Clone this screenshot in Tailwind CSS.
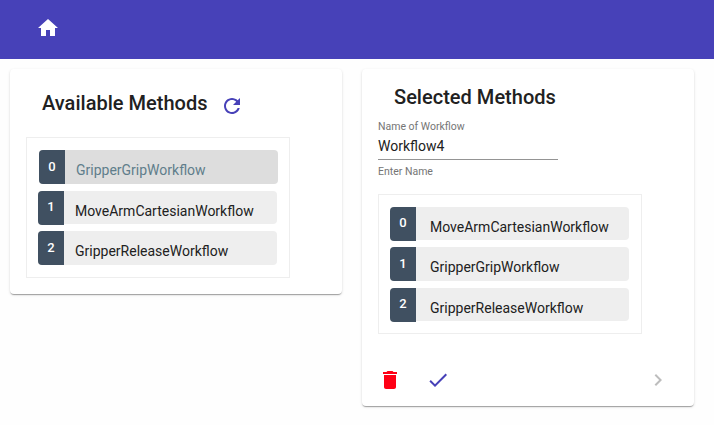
<!DOCTYPE html>
<html lang="en">
<head>
<meta charset="utf-8">
<title>Workflows</title>
<script src="https://cdn.jsdelivr.net/npm/@tailwindcss/browser@4"></script>
</head>
<body class="h-[425px] overflow-hidden bg-[#fefefe] font-['Roboto',sans-serif] text-[#212121]">
<header class="flex h-[59px] items-start bg-[#4741b8] pl-9 pt-4">
  <svg class="size-6 fill-white" viewBox="0 0 24 24"><path d="M10 20v-6h4v6h5v-8h3L12 3 2 12h3v8z"/></svg>
</header>
<main class="flex items-start gap-5 px-2.5 pt-[10px]">
  <section class="h-[225px] w-[332px] rounded bg-white px-4 shadow-[0_2px_1px_-1px_rgba(0,0,0,.2),0_1px_1px_0_rgba(0,0,0,.14),0_1px_3px_0_rgba(0,0,0,.12)]">
    <div class="flex h-[68px] pl-4 pt-[22px]">
      <h2 class="w-[178px] whitespace-nowrap text-[20px] leading-6 font-medium tracking-[0.02px]">Available Methods</h2>
      <svg class="mt-[3px] size-6 fill-[#4741b8]" viewBox="0 0 24 24"><path d="M17.65 6.35C16.2 4.9 14.21 4 12 4c-4.42 0-7.99 3.58-7.99 8s3.57 8 7.99 8c3.73 0 6.84-2.55 7.73-6h-2.08c-.82 2.33-3.04 4-5.65 4-3.31 0-6-2.69-6-6s2.69-6 6-6c1.66 0 3.14.69 4.22 1.78L13 11h7V4l-2.35 2.35z"/></svg>
    </div>
    <ul class="flex h-[141px] w-[264px] flex-col gap-[7px] border border-[#eee] pl-[11px] pt-3 text-[14px]">
      <li class="ml-px flex h-[34px] w-[239px] rounded bg-[#ddd] text-[#607d8b]">
        <span class="h-[34px] w-[26px] rounded-l bg-[#405061] pt-[9px] text-center text-[13px] leading-4 font-medium text-white">0</span>
        <span class="pl-[11px] pt-3 leading-4">GripperGripWorkflow</span>
      </li>
      <li class="flex h-[33px] w-[239px] rounded bg-[#eee]">
        <span class="h-[34px] w-[26px] rounded-l bg-[#405061] pt-2 text-center text-[13px] leading-4 font-medium text-white">1</span>
        <span class="pl-[11px] pt-3 leading-4">MoveArmCartesianWorkflow</span>
      </li>
      <li class="flex h-[34px] w-[239px] rounded bg-[#eee]">
        <span class="h-[34px] w-[26px] rounded-l bg-[#405061] pt-[9px] text-center text-[13px] leading-4 font-medium text-white">2</span>
        <span class="pl-[11px] pt-3 leading-4">GripperReleaseWorkflow</span>
      </li>
    </ul>
  </section>
  <section class="h-[337px] w-[332px] rounded bg-white px-4 shadow-[0_2px_1px_-1px_rgba(0,0,0,.2),0_1px_1px_0_rgba(0,0,0,.14),0_1px_3px_0_rgba(0,0,0,.12)]">
    <h2 class="h-[50px] pl-4 pt-4 text-[20px] leading-6 font-medium tracking-[0.02px]">Selected Methods</h2>
    <div class="flex h-[75px] w-[180px] flex-col">
      <label class="h-[18px] text-[10.5px] leading-4 text-[#757575]">Name of Workflow</label>
      <div class="h-[23px] border-b border-[#949494] text-[14px] leading-[18px]">Workflow4</div>
      <span class="pt-1 text-[10.5px] leading-4 text-[#757575]">Enter Name</span>
    </div>
    <ul class="flex h-[140px] w-[264px] flex-col gap-[7px] border border-[#eee] pl-[11px] pt-3 text-[14px]">
      <li class="flex h-[33px] w-[239px] rounded bg-[#eee]">
        <span class="h-[34px] w-[26px] rounded-l bg-[#405061] pt-2 text-center text-[13px] leading-4 font-medium text-white">0</span>
        <span class="pl-3.5 pt-3 leading-4">MoveArmCartesianWorkflow</span>
      </li>
      <li class="flex h-[34px] w-[239px] rounded bg-[#eee]">
        <span class="h-[34px] w-[26px] rounded-l bg-[#405061] pt-[9px] text-center text-[13px] leading-4 font-medium text-white">1</span>
        <span class="pl-3.5 pt-3 leading-4">GripperGripWorkflow</span>
      </li>
      <li class="flex h-[33px] w-[239px] rounded bg-[#eee]">
        <span class="h-[34px] w-[26px] rounded-l bg-[#405061] pt-2 text-center text-[13px] leading-4 font-medium text-white">2</span>
        <span class="pl-3.5 pt-3 leading-4">GripperReleaseWorkflow</span>
      </li>
    </ul>
    <div class="flex pt-[34px]">
      <svg class="size-6 fill-[#ff0015]" viewBox="0 0 24 24"><path d="M6 19c0 1.1.9 2 2 2h8c1.1 0 2-.9 2-2V7H6v12zM19 4h-3.5l-1-1h-5l-1 1H5v2h14V4z"/></svg>
      <svg class="ml-6 size-6 fill-[#4741b8]" viewBox="0 0 24 24"><path d="M9 16.17L4.83 12l-1.42 1.41L9 19 21 7l-1.41-1.41z"/></svg>
      <svg class="ml-auto mr-2 size-6 fill-[#bdbdbd]" viewBox="0 0 24 24"><path d="M10 6L8.59 7.41 13.17 12l-4.58 4.59L10 18l6-6z"/></svg>
    </div>
  </section>
</main>
</body>
</html>
